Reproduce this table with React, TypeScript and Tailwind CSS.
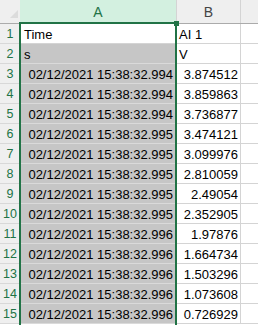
import { ReactNode } from "react"

const rows: [string, string][] = [
  ["02/12/2021 15:38:32.994", "3.874512"],
  ["02/12/2021 15:38:32.994", "3.859863"],
  ["02/12/2021 15:38:32.994", "3.736877"],
  ["02/12/2021 15:38:32.995", "3.474121"],
  ["02/12/2021 15:38:32.995", "3.099976"],
  ["02/12/2021 15:38:32.995", "2.810059"],
  ["02/12/2021 15:38:32.995", "2.49054"],
  ["02/12/2021 15:38:32.995", "2.352905"],
  ["02/12/2021 15:38:32.996", "1.97876"],
  ["02/12/2021 15:38:32.996", "1.664734"],
  ["02/12/2021 15:38:32.996", "1.503296"],
  ["02/12/2021 15:38:32.996", "1.073608"],
  ["02/12/2021 15:38:32.996", "0.726929"],
]

function Row({ n, a, b, active, right }: { n: number; a: ReactNode; b: ReactNode; active?: boolean; right?: boolean }) {
  return (
    <div className="flex h-[20px]">
      <div className="w-[20px] shrink-0 bg-[#efefef] border-b border-[#d8d8d8] flex items-center justify-center pt-[1px] text-[12.5px] text-[#217346]">
        {n}
      </div>
      <div
        className={
          "w-[157px] shrink-0 border-b border-r flex items-center pt-[2px] px-[4px] " +
          (active ? "bg-white border-[#d4d4d4]" : "bg-[#c6c6c6] border-[#dadada]") +
          (right ? " justify-end pr-[3px] text-[13px]" : " text-[13px]")
        }
      >
        {a}
      </div>
      <div className={"w-[64px] shrink-0 bg-white border-b border-r border-[#d4d4d4] flex items-center pt-[2px] px-[2px] text-[13px] " + (right ? "justify-end" : "")}>
        {b}
      </div>
      <div className="flex-1 bg-white border-b border-[#d4d4d4]" />
    </div>
  )
}

export default function App() {
  return (
    <div className="relative w-[258px] h-[325px] overflow-hidden bg-white text-black leading-none" style={{ fontFamily: '"Liberation Sans", Arial, sans-serif' }}>
      {/* Column headers */}
      <div className="flex h-[24px] border-b border-[#ababab] bg-[#efefef]">
        <div className="w-[20px] shrink-0 relative">
          <div className="absolute left-[10px] top-[10px] w-0 h-0 border-l-[8px] border-l-transparent border-b-[8px] border-b-[#dcdcdc]" />
        </div>
        <div className="w-[157px] shrink-0 bg-[#d3f0e0] border-r border-[#d4d4d4] flex items-center justify-center text-[14px] text-[#217346]">
          A
        </div>
        <div className="w-[64px] shrink-0 border-r border-[#d4d4d4] flex items-center justify-center text-[14px] text-[#444]">
          B
        </div>
        <div className="flex-1" />
      </div>

      <Row n={1} a="Time" b="AI 1" active />
      <Row n={2} a="s" b="V" />
      {rows.map(([a, b], i) => (
        <Row key={i} n={i + 3} a={a} b={b} right />
      ))}

      {/* Selection box over column A */}
      <div className="absolute left-[19px] top-[22px] w-[158px] h-[320px] border-2 border-[#217346]" />
      <div className="absolute left-[174px] top-[21px] w-[5px] h-[5px] bg-[#217346]" />
    </div>
  )
}
